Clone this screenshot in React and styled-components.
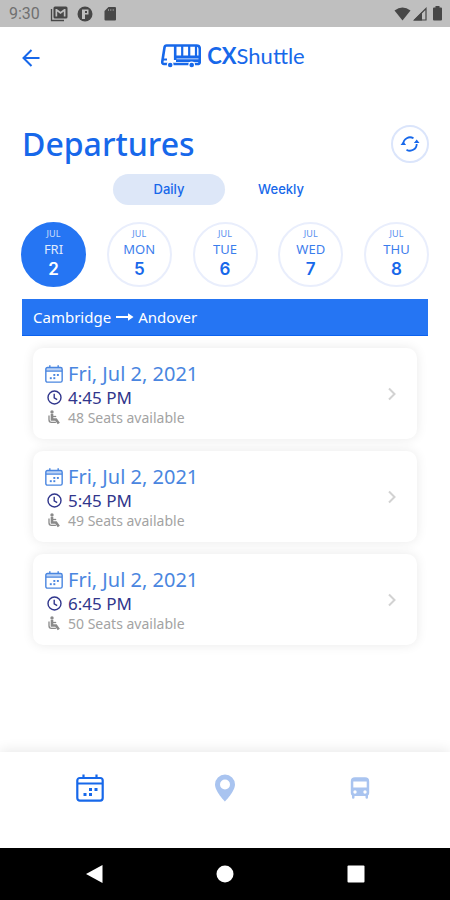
import React, { useState } from "react";
import styled, { createGlobalStyle } from "styled-components";

const blue = "#1768ea";
const fill = "#2575f3";
const pale = "#a9c4f0";

const GlobalStyle = createGlobalStyle`
  *, *::before, *::after { box-sizing: border-box; }
  body { margin: 0; background: #fff; }
  button { font: inherit; color: inherit; background: none; border: 0; padding: 0; cursor: pointer; }
  svg { display: block; }
`;

const Screen = styled.div`
  min-height: 100vh;
  display: flex;
  flex-direction: column;
  background: #fff;
  color: ${blue};
  font-family: "Noto Sans", sans-serif;
`;

const StatusBar = styled.div`
  height: 27px;
  padding: 0 5px 0 9px;
  display: flex;
  align-items: center;
  justify-content: space-between;
  background: #bfbfbf;
  color: #474747;
`;

const StatusGroup = styled.div`
  display: flex;
  align-items: center;
  gap: ${(p) => p.$gap}px;
`;

const Clock = styled.span`
  width: 32px;
  font: 16px/27px Roboto, sans-serif;
  color: #707070;
`;

const Header = styled.header`
  height: 61px;
  padding: 0 20px;
  display: grid;
  grid-template-columns: 24px 1fr 8px;
  align-items: center;
`;

const Logo = styled.div`
  display: flex;
  align-items: center;
  justify-content: center;
  gap: 6px;
  padding-bottom: 4px;
`;

const LogoText = styled.span`
  font: 400 22px/28px Lato, sans-serif;
  white-space: nowrap;

  b { font-weight: 700; }
`;

const Main = styled.main`
  padding: 36px 21px 24px;
`;

const TitleRow = styled.div`
  height: 40px;
  display: flex;
  align-items: center;
  justify-content: space-between;
`;

const Title = styled.h1`
  margin: 0;
  padding-left: 1px;
  font-size: 32px;
  font-weight: 500;
  line-height: 40px;
`;

const RoundButton = styled.button`
  width: 38px;
  height: 38px;
  border: 2px solid #dbe5fb;
  border-radius: 50%;
  display: grid;
  place-items: center;
`;

const Segments = styled.div`
  margin-top: 10px;
  display: flex;
  justify-content: center;
`;

const Segment = styled.button`
  width: 112px;
  height: 31px;
  border-radius: 16px;
  background: ${(p) => (p.$active ? "#dde7f8" : "transparent")};
  font: 500 13px/31px Inter, sans-serif;
`;

const Days = styled.div`
  margin-top: 17px;
  display: flex;
  justify-content: space-between;
`;

const Day = styled.button`
  width: 65px;
  height: 65px;
  padding-top: 5px;
  border: 2px solid ${(p) => (p.$active ? fill : "#e9eefc")};
  border-radius: 50%;
  display: flex;
  flex-direction: column;
  align-items: center;
  background: ${(p) => (p.$active ? fill : "#fff")};
  color: ${(p) => (p.$active ? "#fff" : blue)};
`;

const Month = styled.span`
  font-size: 9px;
  line-height: 10px;
  opacity: 0.75;
`;

const Weekday = styled.span`
  font-size: 13px;
  line-height: 20px;
  opacity: 0.85;
`;

const DayNumber = styled.span`
  font: 600 17px/20px Inter, sans-serif;
`;

const Route = styled.h2`
  margin: 12px 1px 0;
  padding: 0 11px;
  height: 37px;
  display: flex;
  align-items: center;
  gap: 4px;
  background: ${fill};
  border-bottom: 1px solid #0b62ef;
  color: #fff;
  font-size: 15px;
  font-weight: 400;
`;

const Trips = styled.div`
  margin: 12px 12px 0;
  display: grid;
  gap: 12px;
`;

const Trip = styled.button`
  width: 100%;
  padding: 12px 18px 12px 12px;
  border-radius: 10px;
  display: flex;
  align-items: center;
  justify-content: space-between;
  background: #fff;
  box-shadow: 0 0 12px rgba(0, 0, 0, 0.09);
  text-align: left;
`;

const TripLine = styled.span`
  display: grid;
  grid-template-columns: 18px auto;
  justify-items: center;
  align-items: center;
  column-gap: 5px;
  justify-content: start;
`;

const DateLine = styled(TripLine)`
  color: #4a86e0;
  font-size: 20px;
  line-height: 27px;
`;

const TimeLine = styled(TripLine)`
  color: #30368c;
  font-size: 17px;
  line-height: 21px;
`;

const SeatLine = styled(TripLine)`
  color: #a3a3a3;
  font-size: 14px;
  line-height: 19px;
`;

const TabBar = styled.nav`
  margin-top: auto;
  height: 96px;
  padding: 15px 22px 0;
  display: grid;
  grid-template-columns: repeat(3, 1fr);
  align-items: start;
  background: #fff;
  box-shadow: 0 -2px 12px rgba(0, 0, 0, 0.09);
`;

const Tab = styled.button`
  height: 42px;
  display: grid;
  place-items: center;
  color: ${(p) => (p.$active ? blue : pale)};
`;

const SystemBar = styled.div`
  height: 52px;
  padding: 0 29px;
  display: grid;
  grid-template-columns: repeat(3, 1fr);
  background: #000;
  color: #fff;
`;

const SystemButton = styled.button`
  display: grid;
  place-items: center;
`;

function CalendarIcon({ size, shade = "none" }) {
  return (
    <svg width={size} height={size} viewBox="0 0 28 28" fill="none" stroke="currentColor" strokeWidth="2.2" aria-hidden="true">
      <path d="M1.5 4h25v5.5h-25Z" fill={shade} stroke="none" />
      <rect x="1.3" y="4" width="25.4" height="22.6" rx="2.5" />
      <path d="M1.5 9.5h25M7.5 .5v4M20.5 .5v4" />
      <g fill="currentColor" stroke="none">
        <rect x="13" y="14" width="3" height="3" />
        <rect x="18.5" y="14" width="3" height="3" />
        <rect x="7.5" y="19" width="3" height="3" />
        <rect x="13" y="19" width="3" height="3" />
      </g>
    </svg>
  );
}

function ClockIcon() {
  return (
    <svg width="15" height="15" viewBox="0 0 15 15" fill="none" stroke="currentColor" strokeWidth="1.4" aria-hidden="true">
      <circle cx="7.5" cy="7.5" r="6.5" />
      <path d="M7.2 3.8v4l3 1.8" />
    </svg>
  );
}

function SeatIcon() {
  return (
    <svg width="14" height="15" viewBox="0 0 14 15" fill="none" stroke="#8a8a8a" aria-hidden="true">
      <circle cx="5" cy="2" r="1.7" fill="#8a8a8a" stroke="none" />
      <path d="M5 4v5.5h4l2.8 4" strokeWidth="2.6" />
      <path d="M5.5 6.5h3.7" strokeWidth="1.3" />
      <path d="M2 5.5v4.2q0 2.6 2.4 2.6h4.5" strokeWidth="1.3" />
    </svg>
  );
}

function BusLogo() {
  return (
    <svg width="40" height="24" viewBox="0 0 40 24" fill="none" stroke="currentColor" aria-hidden="true">
      <path d="M5.5 1.5H35.5Q38.8 1.5 38.8 5V17.5Q38.8 20 36.5 20H3Q1 20 1.3 17.5L3.5 3.5Q3.8 1.5 5.5 1.5" strokeWidth="2.6" />
      <path d="M14.2 2v14" strokeWidth="2.6" />
      <path d="M21.2 2v11M28.2 2v11M35 2v11" strokeWidth="2.2" />
      <path d="M13 13H38M15 16.7H38" strokeWidth="2.8" />
      <path d="M2 15.5h4" strokeWidth="2" />
      <circle cx="9.2" cy="21" r="3.4" fill="#fff" stroke="none" />
      <circle cx="30.7" cy="21" r="3.4" fill="#fff" stroke="none" />
      <circle cx="9.2" cy="21" r="2.3" fill="currentColor" stroke="none" />
      <circle cx="30.7" cy="21" r="2.3" fill="currentColor" stroke="none" />
    </svg>
  );
}

const days = [
  ["FRI", 2],
  ["MON", 5],
  ["TUE", 6],
  ["WED", 7],
  ["THU", 8],
];

const trips = [
  { time: "4:45 PM", seats: 48 },
  { time: "5:45 PM", seats: 49 },
  { time: "6:45 PM", seats: 50 },
];

export default function App() {
  const [day, setDay] = useState(2);
  const [mode, setMode] = useState("Daily");

  return (
    <Screen>
      <GlobalStyle />
      <StatusBar>
        <StatusGroup $gap={9}>
          <Clock>9:30</Clock>
          <svg width="18" height="16" viewBox="0 0 18 16" aria-hidden="true">
            <path d="M1.5 3v11.5H14" fill="none" stroke="currentColor" strokeWidth="1.3" />
            <path fillRule="evenodd" fill="currentColor" d="M5 .5h11q1.5 0 1.5 1.5v9q0 1.5-1.5 1.5H5q-1.5 0-1.5-1.5V2Q3.5.5 5 .5M5.5 3v7.5h1.7V5.5l3.3 2.4 3.3-2.4v5h1.7V3h-1.3L10.5 5.8 6.8 3Z" />
          </svg>
          <svg width="16" height="16" viewBox="0 0 16 16" aria-hidden="true">
            <circle cx="8" cy="8" r="7.5" fill="currentColor" />
            <path d="M5 3.5h6.500v5H8V13H5Z" fill="#bfbfbf" />
            <path d="M8 5h2v2H8Z" fill="currentColor" />
          </svg>
          <svg width="16" height="16" viewBox="0 0 16 16" aria-hidden="true">
            <path d="M6.5 1H13q1 0 1 1v11.5q0 1-1 1H3.5q-1 0-1-1V5Z" fill="currentColor" />
            <path d="M6.5 3v2M8.8 3v2M11.2 3v2" stroke="#888" />
          </svg>
        </StatusGroup>
        <StatusGroup $gap={2}>
          <svg width="17" height="14" viewBox="0 0 17 14" aria-hidden="true">
            <path d="M.5 3.5Q8.5-2.5 16.5 3.5L8.5 13.5Z" fill="currentColor" />
          </svg>
          <svg width="15" height="14" viewBox="0 0 15 14" aria-hidden="true">
            <path d="M1.5 13 13 1.5V13Z" fill="none" stroke="currentColor" strokeWidth="1.2" />
            <path d="M.5 13.5 9 5v8.5Z" fill="currentColor" />
          </svg>
          <svg width="15" height="15" viewBox="0 0 15 15" aria-hidden="true">
            <path d="M5.5 0h4v1.5H11q1 0 1 1v11q0 1-1 1H4q-1 0-1-1v-11q0-1 1-1h1.5Z" fill="currentColor" />
          </svg>
        </StatusGroup>
      </StatusBar>

      <Header>
        <button aria-label="Back">
          <svg width="22" height="20" viewBox="0 0 22 20" fill="none" stroke="currentColor" strokeWidth="2">
            <path d="M19.5 10H4M11.5 2 3.5 10l8 8" />
          </svg>
        </button>
        <Logo>
          <BusLogo />
          <LogoText><b>CX</b>Shuttle</LogoText>
        </Logo>
      </Header>

      <Main>
        <TitleRow>
          <Title>Departures</Title>
          <RoundButton aria-label="Refresh">
            <svg width="20" height="18" viewBox="0 0 20 18" fill="none" stroke="currentColor" strokeWidth="1.8">
              <path d="M3.3 9A6.7 6.7 0 0 1 13.5 3.3M16.7 9A6.7 6.7 0 0 1 6.5 14.7" />
              <path d="M.5 10h5.6L3.3 6.5ZM13.9 8h5.6L16.7 4.5Z" fill="currentColor" stroke="none" />
            </svg>
          </RoundButton>
        </TitleRow>

        <Segments>
          {["Daily", "Weekly"].map((m) => (
            <Segment key={m} $active={m === mode} aria-pressed={m === mode} onClick={() => setMode(m)}>{m}</Segment>
          ))}
        </Segments>

        <Days>
          {days.map(([name, n]) => (
            <Day key={n} $active={n === day} aria-pressed={n === day} onClick={() => setDay(n)}>
              <Month>JUL</Month>
              <Weekday>{name}</Weekday>
              <DayNumber>{n}</DayNumber>
            </Day>
          ))}
        </Days>

        <Route>
          <span>Cambridge</span>
          <svg width="19" height="10" viewBox="0 0 19 10" role="img" aria-label="to">
            <path d="M1 5h13" stroke="currentColor" strokeWidth="2" />
            <path d="M13 1.2 18.5 5 13 8.8Z" fill="currentColor" />
          </svg>
          <span>Andover</span>
        </Route>

        <Trips>
          {trips.map((t) => (
            <Trip key={t.time}>
              <span>
                <DateLine><CalendarIcon size={18} shade="#bcd3f6" />Fri, Jul 2, 2021</DateLine>
                <TimeLine><ClockIcon />{t.time}</TimeLine>
                <SeatLine><SeatIcon />{t.seats} Seats available</SeatLine>
              </span>
              <svg width="14" height="14" viewBox="0 0 14 14" fill="none" stroke="#d2d2d2" strokeWidth="2" aria-hidden="true">
                <path d="m4 1.5 5.5 5.5L4 12.5" />
              </svg>
            </Trip>
          ))}
        </Trips>
      </Main>

      <TabBar>
        <Tab $active aria-label="Departures"><CalendarIcon size={28} /></Tab>
        <Tab aria-label="Stops">
          <svg width="22" height="28" viewBox="0 0 22 28">
            <path fill="currentColor" fillRule="evenodd" d="M11 .5A10 10 0 0 0 1 10.5C1 17.5 11 27.5 11 27.5S21 17.5 21 10.5A10 10 0 0 0 11 .5M11 5.5a5 5 0 1 1 0 10a5 5 0 0 1 0-10" />
          </svg>
        </Tab>
        <Tab aria-label="Buses">
          <svg width="20" height="22" viewBox="0 0 20 22">
            <path fill="currentColor" fillRule="evenodd" d="M5 .3H15Q19.2.3 19.2 4.5V16Q19.2 17.7 18 18.5V20.5Q18 21.7 16.8 21.7T15.5 20.5V19H4.5v1.5Q4.5 21.7 3.2 21.7T2 20.5v-2Q.8 17.7.8 16V4.5Q.8.3 5 .3M3.3 4.5v6H16.7V4.5ZM5 13.3a1.7 1.7 0 1 0 0 3.4a1.7 1.7 0 0 0 0-3.4M15 13.3a1.7 1.7 0 1 0 0 3.4a1.7 1.7 0 0 0 0-3.4" />
          </svg>
        </Tab>
      </TabBar>

      <SystemBar>
        <SystemButton aria-label="System back">
          <svg width="18" height="18" viewBox="0 0 18 18"><path d="M17.5 0v18L1 9Z" fill="currentColor" /></svg>
        </SystemButton>
        <SystemButton aria-label="Home">
          <svg width="18" height="18" viewBox="0 0 18 18"><circle cx="9" cy="9" r="8.5" fill="currentColor" /></svg>
        </SystemButton>
        <SystemButton aria-label="Recent apps">
          <svg width="18" height="18" viewBox="0 0 18 18"><rect x=".5" y=".5" width="17" height="17" rx="1" fill="currentColor" /></svg>
        </SystemButton>
      </SystemBar>
    </Screen>
  );
}
